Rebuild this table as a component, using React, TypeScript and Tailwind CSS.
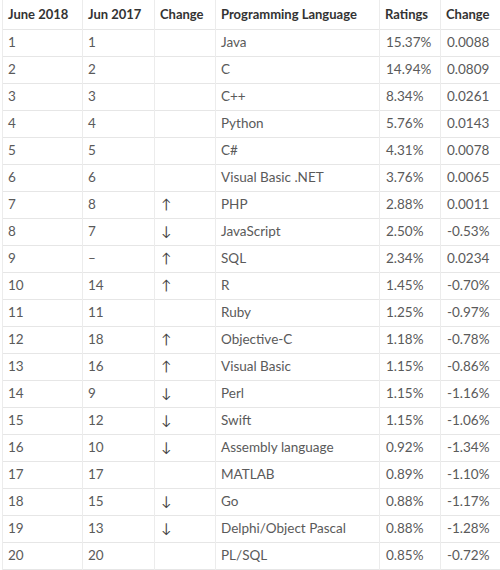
const rows: [string, string, string, string, string, string][] = [
  ["1", "1", "", "Java", "15.37%", "0.0088"],
  ["2", "2", "", "C", "14.94%", "0.0809"],
  ["3", "3", "", "C++", "8.34%", "0.0261"],
  ["4", "4", "", "Python", "5.76%", "0.0143"],
  ["5", "5", "", "C#", "4.31%", "0.0078"],
  ["6", "6", "", "Visual Basic .NET", "3.76%", "0.0065"],
  ["7", "8", "up", "PHP", "2.88%", "0.0011"],
  ["8", "7", "down", "JavaScript", "2.50%", "-0.53%"],
  ["9", "–", "up", "SQL", "2.34%", "0.0234"],
  ["10", "14", "up", "R", "1.45%", "-0.70%"],
  ["11", "11", "", "Ruby", "1.25%", "-0.97%"],
  ["12", "18", "up", "Objective-C", "1.18%", "-0.78%"],
  ["13", "16", "up", "Visual Basic", "1.15%", "-0.86%"],
  ["14", "9", "down", "Perl", "1.15%", "-1.16%"],
  ["15", "12", "down", "Swift", "1.15%", "-1.06%"],
  ["16", "10", "down", "Assembly language", "0.92%", "-1.34%"],
  ["17", "17", "", "MATLAB", "0.89%", "-1.10%"],
  ["18", "15", "down", "Go", "0.88%", "-1.17%"],
  ["19", "13", "down", "Delphi/Object Pascal", "0.88%", "-1.28%"],
  ["20", "20", "", "PL/SQL", "0.85%", "-0.72%"],
];

const headers = ["June 2018", "Jun 2017", "Change", "Programming Language", "Ratings", "Change"];
const widths = ["w-[80px]", "w-[72px]", "w-[61px]", "w-[164px]", "w-[61px]", "w-[62px]"];

export default function App() {
  return (
    <div className="w-[500px] h-[570px] bg-white overflow-hidden font-['Lato',sans-serif]">
      <table className="ml-[2px] border-collapse table-fixed w-[500px]">
        <thead>
          <tr className="h-[29px] border-b border-[#e6e6e6] text-[13px]">
            {headers.map((h, i) => (
              <th
                key={i}
                className={`${widths[i]} border-l border-[#ececec] pl-[5px] text-left font-bold text-[#333]`}
              >
                {h}
              </th>
            ))}
          </tr>
        </thead>
        <tbody>
          {rows.map((r, i) => (
            <tr key={i} className="h-[27px] border-b border-[#e6e6e6] text-[13.5px] text-[#5a5a5a]">
              <td className="border-l border-[#ececec] pl-[5px]">{r[0]}</td>
              <td className="border-l border-[#ececec] pl-[5px]">{r[1]}</td>
              <td className="border-l border-[#ececec] pl-[6px] text-[#444]">
                {r[2] === "up" ? "↑" : r[2] === "down" ? "↓" : ""}
              </td>
              <td className="border-l border-[#ececec] pl-[5px]">{r[3]}</td>
              <td className="border-l border-[#ececec] pl-[6px]">{r[4]}</td>
              <td className="border-l border-[#ececec] pl-[6px]">{r[5]}</td>
            </tr>
          ))}
        </tbody>
      </table>
    </div>
  );
}
